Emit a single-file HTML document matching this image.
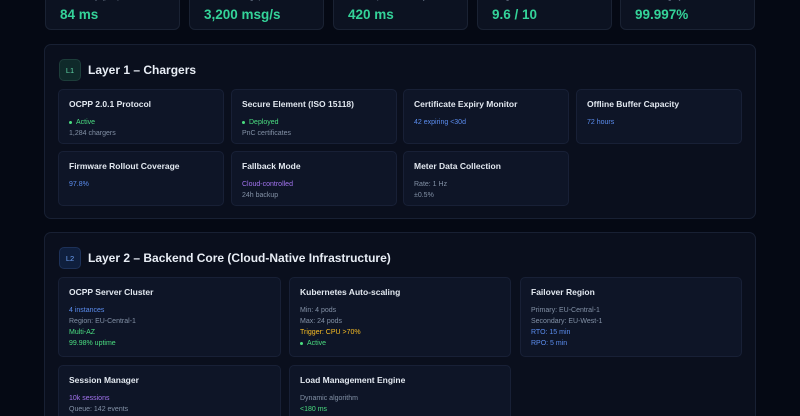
<!DOCTYPE html><html style="width:800px;height:416px;overflow:hidden"><head><style>
*{margin:0;padding:0;box-sizing:border-box}
body{width:800px;height:416px;overflow:hidden;background:#050914;font-family:"Liberation Sans",sans-serif;position:relative;color:#e2e8f0}
.k{position:absolute;top:-20px;height:50px;background:#0c1221;border:1px solid #1a2233;border-radius:6px;padding:0 14px}
.k .l{font-size:8px;color:#94a3b8;margin-top:11px}
.k .v{font-size:13.5px;font-weight:bold;color:#34d399;margin-top:6px}
.s{position:absolute;left:44px;width:712px;background:#0a0f1d;border:1px solid #182033;border-radius:7px}
.b{position:absolute;left:14px;top:14px;width:22px;height:22px;border-radius:5px;font-size:7.5px;display:flex;align-items:center;justify-content:center}
.t{position:absolute;left:43px;top:18px;font-size:12px;font-weight:bold;color:#e8edf5}
.c{position:absolute;background:#0e1527;border:1px solid #182036;border-radius:5px;padding:9px 10px}
.c h4{font-size:8.5px;font-weight:bold;color:#e2e8f0;margin-bottom:8px}
.c p{font-size:7px;color:#8391a6;line-height:11px}
.g{color:#4ade80!important}.bl{color:#5b8def!important}.pu{color:#a374f0!important}.y{color:#fbbf24!important}
.d::before{content:"";display:inline-block;width:3px;height:3px;border-radius:50%;background:#4ade80;margin-right:4px;vertical-align:middle}
</style></head><body>
<div class="k" style="left:45px;width:135px"><div class="l">Tx Latency (p95)</div><div class="v">84 ms</div></div>
<div class="k" style="left:189px;width:135px"><div class="l">OCPP Throughput</div><div class="v">3,200 msg/s</div></div>
<div class="k" style="left:333px;width:135px"><div class="l">Grid Dispatch Latency</div><div class="v">420 ms</div></div>
<div class="k" style="left:477px;width:135px"><div class="l">Integration Health</div><div class="v">9.6 / 10</div></div>
<div class="k" style="left:620px;width:135px"><div class="l">Data Integrity Rate</div><div class="v">99.997%</div></div>

<div class="s" style="top:44px;height:175px">
<div class="b" style="background:#0f2a2a;border:1px solid #1d3d3a;color:#5fd3a5">L1</div>
<div class="t">Layer 1 – Chargers</div>
</div>
<div class="c" style="left:58px;top:89px;width:166px;height:55px"><h4>OCPP 2.0.1 Protocol</h4><p class="g d">Active</p><p>1,284 chargers</p></div>
<div class="c" style="left:231px;top:89px;width:166px;height:55px"><h4>Secure Element (ISO 15118)</h4><p class="g d">Deployed</p><p>PnC certificates</p></div>
<div class="c" style="left:403px;top:89px;width:166px;height:55px"><h4>Certificate Expiry Monitor</h4><p class="bl">42 expiring &lt;30d</p></div>
<div class="c" style="left:576px;top:89px;width:166px;height:55px"><h4>Offline Buffer Capacity</h4><p class="bl">72 hours</p></div>
<div class="c" style="left:58px;top:151px;width:166px;height:55px"><h4>Firmware Rollout Coverage</h4><p class="bl">97.8%</p></div>
<div class="c" style="left:231px;top:151px;width:166px;height:55px"><h4>Fallback Mode</h4><p class="pu">Cloud-controlled</p><p>24h backup</p></div>
<div class="c" style="left:403px;top:151px;width:166px;height:55px"><h4>Meter Data Collection</h4><p>Rate: 1 Hz</p><p>±0.5%</p></div>

<div class="s" style="top:232px;height:184px;border-bottom:none;border-radius:7px 7px 0 0">
<div class="b" style="background:#0f1f3d;border:1px solid #1d3158;color:#6ea1f5">L2</div>
<div class="t">Layer 2 – Backend Core (Cloud-Native Infrastructure)</div>
</div>
<div class="c" style="left:58px;top:277px;width:223px;height:80px"><h4>OCPP Server Cluster</h4><p class="bl">4 instances</p><p>Region: EU-Central-1</p><p class="g">Multi-AZ</p><p class="g">99.98% uptime</p></div>
<div class="c" style="left:289px;top:277px;width:222px;height:80px"><h4>Kubernetes Auto-scaling</h4><p>Min: 4 pods</p><p>Max: 24 pods</p><p class="y">Trigger: CPU &gt;70%</p><p class="g d">Active</p></div>
<div class="c" style="left:520px;top:277px;width:222px;height:80px"><h4>Failover Region</h4><p>Primary: EU-Central-1</p><p>Secondary: EU-West-1</p><p class="bl">RTO: 15 min</p><p class="bl">RPO: 5 min</p></div>
<div class="c" style="left:58px;top:365px;width:223px;height:51px;border-bottom:none;border-radius:5px 5px 0 0"><h4>Session Manager</h4><p class="pu">10k sessions</p><p>Queue: 142 events</p></div>
<div class="c" style="left:289px;top:365px;width:222px;height:51px;border-bottom:none;border-radius:5px 5px 0 0"><h4>Load Management Engine</h4><p>Dynamic algorithm</p><p class="g">&lt;180 ms</p></div>
</body></html>
